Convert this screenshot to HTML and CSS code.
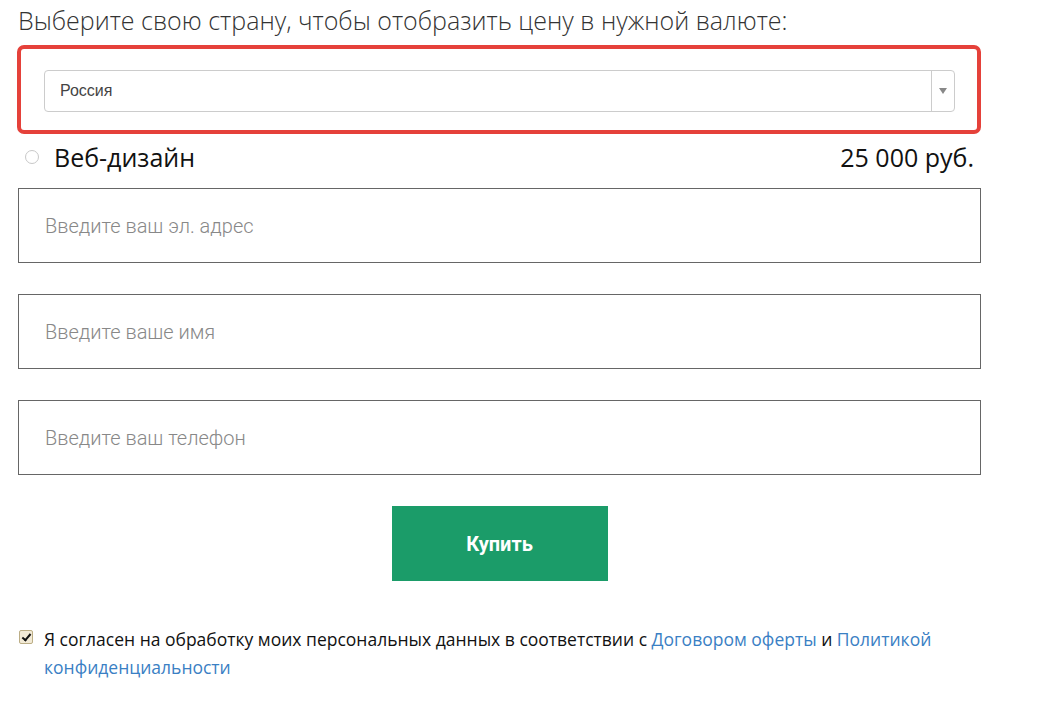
FILE: index.html
```html
<!DOCTYPE html>
<html lang="ru">
<head>
    <meta charset="UTF-8">
    <title>Выбор страны</title>
    <link rel="stylesheet" href="styles.css">
</head>
<body>
    <div class="order">
        <h2 class="order-title">Выберите свою страну, чтобы отобразить цену в нужной валюте:</h2>

        <div class="country-box">
            <div class="country-select">
                <span class="country-value">Россия</span>
                <span class="country-arrow"></span>
            </div>
        </div>

        <div class="product-row">
            <label class="product-name"><span class="radio"></span>Веб-дизайн</label>
            <span class="product-price">25 000 руб.</span>
        </div>

        <!-- поля формы -->
        <div class="field"><input type="text" placeholder="Введите ваш эл. адрес"></div>
        <div class="field"><input type="text" placeholder="Введите ваше имя"></div>
        <div class="field"><input type="text" placeholder="Введите ваш телефон"></div>

        <div class="buy-wrap">
            <button type="button" class="buy">Купить</button>
        </div>

        <div class="agree">
            <span class="check"></span>
            <p>Я согласен на обработку моих персональных данных в соответствии с <a href="#">Договором оферты</a> и <a href="#">Политикой конфиденциальности</a></p>
        </div>
    </div>
</body>
</html>
```

FILE: styles.css
```css
body {
    margin: 0;
    padding: 0;
    background-color: #fff;
    font-family: "Open Sans", Arial, sans-serif;
    color: #111;
}

.order {
    width: 964px;
    padding-left: 17px;
}

.order-title {
    margin: 0;
    padding: 4px 0 0 1px;
    font-size: 25px;
    font-weight: 300;
    line-height: 32px;
    color: #333;
}

/* Выбор страны */
.country-box {
    margin-top: 9px;
    border: 4px solid #e5413a;
    border-radius: 7px;
    padding: 21px 22px 18px 23px;
}

.country-select {
    display: flex;
    height: 40px;
    border: 1px solid #ccc;
    border-radius: 4px;
    background-color: #fff;
}

.country-value {
    flex: 1;
    padding-left: 15px;
    font-family: "Liberation Sans", Arial, sans-serif;
    font-size: 16px;
    line-height: 40px;
    color: #444;
}

.country-arrow {
    width: 22px;
    border-left: 1px solid #ccc;
    position: relative;
}

.country-arrow::after {
    content: "";
    position: absolute;
    left: 7px;
    top: 17px;
    border-left: 4px solid transparent;
    border-right: 4px solid transparent;
    border-top: 6px solid #888;
}

/* Товар */
.product-row {
    display: flex;
    justify-content: space-between;
    align-items: center;
    height: 46px;
    padding: 0 7px 0 8px;
    margin-bottom: 8px;
    font-size: 25px;
    color: #111;
}

.product-name {
    display: flex;
    align-items: center;
}

.radio {
    width: 12px;
    height: 12px;
    border: 1px solid #c8c8c8;
    border-radius: 50%;
    margin-right: 15px;
    margin-top: 0;
}

/* Поля */
.field {
    margin-bottom: 31px;
    margin-left: 1px;
}

.field input {
    box-sizing: border-box;
    width: 963px;
    height: 75px;
    padding: 0 26px;
    border: 1px solid #666;
    border-radius: 0;
    font-family: Roboto, Arial, sans-serif;
    font-size: 20px;
    font-weight: 300;
    color: #333;
    outline: none;
}

.field input::placeholder {
    color: #888;
}

/* Кнопка */
.buy-wrap {
    display: flex;
    justify-content: center;
    padding-left: 1px;
}

.buy {
    width: 216px;
    height: 75px;
    border: none;
    background-color: #1b9c69;
    color: #fff;
    font-family: Roboto, Arial, sans-serif;
    font-size: 20px;
    font-weight: 700;
    cursor: pointer;
}

/* Согласие */
.agree {
    display: flex;
    align-items: flex-start;
    margin-top: 44px;
    padding-left: 2px;
}

.check {
    flex: none;
    position: relative;
    width: 12px;
    height: 12px;
    margin-top: 5px;
    margin-right: 11px;
    border: 1px solid #bcae86;
    border-radius: 2px;
    background-color: #f2ead6;
}

.check::after {
    content: "";
    position: absolute;
    left: 4px;
    top: 1px;
    width: 3px;
    height: 7px;
    border-right: 2px solid #111;
    border-bottom: 2px solid #111;
    transform: rotate(40deg);
}

.agree p {
    margin: 0;
    font-size: 17.5px;
    line-height: 28px;
    color: #111;
}

.agree a {
    color: #3a80c4;
    text-decoration: none;
}
```
